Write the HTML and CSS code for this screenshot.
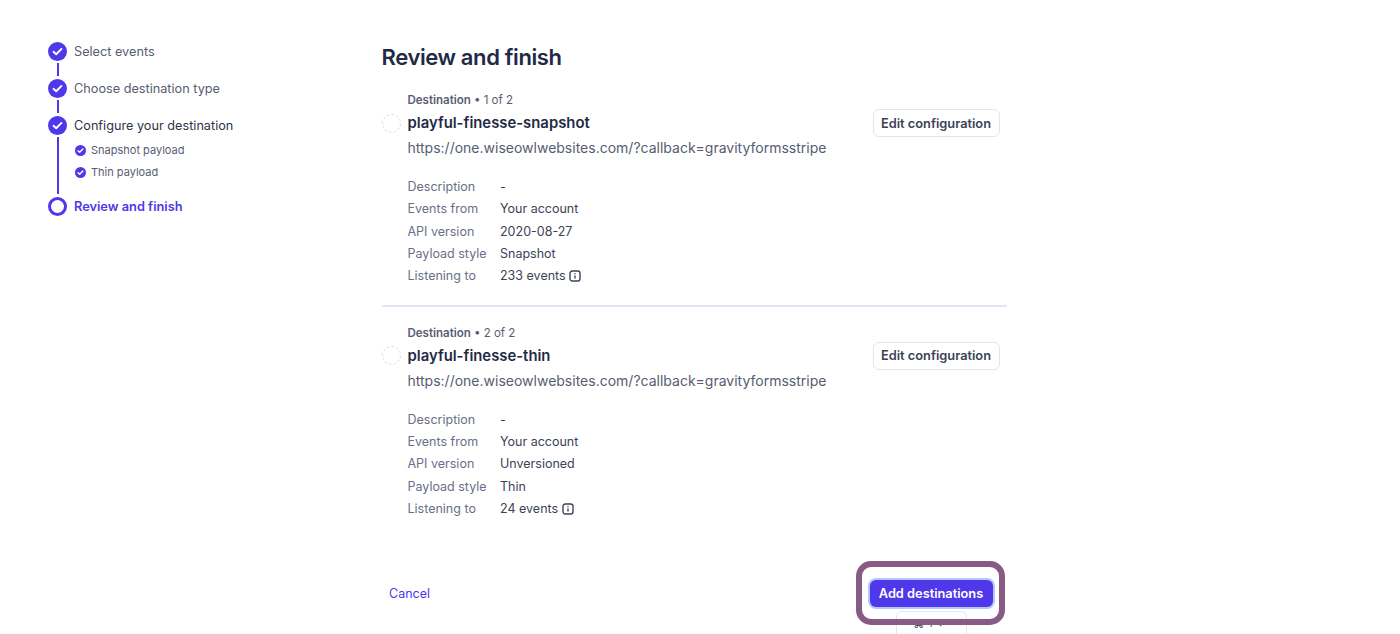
FILE: index.html
```html
<!DOCTYPE html>
<html lang="en">
<head>
  <meta charset="UTF-8" />
  <title>Review and finish</title>
  <link rel="stylesheet" href="styles.css">
</head>
<body>
  <div class="page">
    <nav class="steps">
      <div class="step">
        <span class="dot"><svg viewBox="0 0 20 20" width="19" height="19"><path d="M5.8 10.3l2.8 2.6 5.6-5.6" fill="none" stroke="#fff" stroke-width="2" stroke-linecap="round" stroke-linejoin="round"/></svg></span>
        <span class="step-label">Select events</span>
      </div>
      <div class="link"></div>
      <div class="step">
        <span class="dot"><svg viewBox="0 0 20 20" width="19" height="19"><path d="M5.8 10.3l2.8 2.6 5.6-5.6" fill="none" stroke="#fff" stroke-width="2" stroke-linecap="round" stroke-linejoin="round"/></svg></span>
        <span class="step-label">Choose destination type</span>
      </div>
      <div class="link"></div>
      <div class="step">
        <span class="dot"><svg viewBox="0 0 20 20" width="19" height="19"><path d="M5.8 10.3l2.8 2.6 5.6-5.6" fill="none" stroke="#fff" stroke-width="2" stroke-linecap="round" stroke-linejoin="round"/></svg></span>
        <span class="step-label dark">Configure your destination</span>
      </div>
      <div class="sub-block">
        <div class="link long"></div>
        <div class="subs">
          <div class="sub">
            <span class="sub-dot"><svg viewBox="0 0 12 12" width="11" height="11"><path d="M3.3 6.2l1.8 1.7 3.5-3.6" fill="none" stroke="#fff" stroke-width="1.5" stroke-linecap="round" stroke-linejoin="round"/></svg></span>
            Snapshot payload
          </div>
          <div class="sub">
            <span class="sub-dot"><svg viewBox="0 0 12 12" width="11" height="11"><path d="M3.3 6.2l1.8 1.7 3.5-3.6" fill="none" stroke="#fff" stroke-width="1.5" stroke-linecap="round" stroke-linejoin="round"/></svg></span>
            Thin payload
          </div>
        </div>
      </div>
      <div class="step">
        <span class="dot open"></span>
        <span class="step-label current">Review and finish</span>
      </div>
    </nav>

    <main class="main">
      <h1>Review and finish</h1>

      <section class="dest">
        <div class="eyebrow"><strong>Destination</strong> • 1 of 2</div>
        <div class="dest-head">
          <span class="spinner"></span>
          <div class="dest-name">playful-finesse-snapshot</div>
          <button class="edit">Edit configuration</button>
        </div>
        <div class="url">https://one.wiseowlwebsites.com/?callback=gravityformsstripe</div>
        <dl class="info">
          <dt>Description</dt><dd>-</dd>
          <dt>Events from</dt><dd>Your account</dd>
          <dt>API version</dt><dd>2020-08-27</dd>
          <dt>Payload style</dt><dd>Snapshot</dd>
          <dt>Listening to</dt>
          <dd>233 events <svg class="info-icon" viewBox="0 0 12 12" width="12" height="12"><rect x="1" y="1" width="10" height="10" rx="2.2" fill="none" stroke="#3c4257" stroke-width="1.4"/><path d="M6 5.4v3M6 3.3v.9" stroke="#3c4257" stroke-width="1.4"/></svg></dd>
        </dl>
      </section>

      <section class="dest second">
        <div class="eyebrow"><strong>Destination</strong> • 2 of 2</div>
        <div class="dest-head">
          <span class="spinner"></span>
          <div class="dest-name">playful-finesse-thin</div>
          <button class="edit">Edit configuration</button>
        </div>
        <div class="url">https://one.wiseowlwebsites.com/?callback=gravityformsstripe</div>
        <dl class="info">
          <dt>Description</dt><dd>-</dd>
          <dt>Events from</dt><dd>Your account</dd>
          <dt>API version</dt><dd>Unversioned</dd>
          <dt>Payload style</dt><dd>Thin</dd>
          <dt>Listening to</dt>
          <dd>24 events <svg class="info-icon" viewBox="0 0 12 12" width="12" height="12"><rect x="1" y="1" width="10" height="10" rx="2.2" fill="none" stroke="#3c4257" stroke-width="1.4"/><path d="M6 5.4v3M6 3.3v.9" stroke="#3c4257" stroke-width="1.4"/></svg></dd>
        </dl>
      </section>

      <footer class="actions">
        <a class="cancel">Cancel</a>
        <div class="add-wrap">
          <button class="add">Add destinations</button>
          <span class="highlight"></span>
          <span class="shortcut">⌘ + ↵</span>
        </div>
      </footer>
    </main>
  </div>
</body>
</html>
```

FILE: styles.css
```css
html, body {
  margin: 0;
  padding: 0;
  height: 100%;
  background: white;
  font-family: Inter, "Liberation Sans", sans-serif;
  color: #3c4257;
  overflow: hidden;
}
.page {
  display: flex;
  align-items: flex-start;
  padding: 0 0 0 48px;
}

/* Left step list */
.steps {
  width: 333.5px;
  flex: none;
  padding-top: 41px;
}
.step {
  display: flex;
  align-items: center;
  gap: 7px;
  height: 20px;
}
.dot {
  width: 19px;
  height: 19px;
  flex: none;
  border-radius: 50%;
  background: #4f37ea;
  display: block;
}
.dot svg {
  display: block;
}
.dot.open {
  box-sizing: border-box;
  background: white;
  border: 3px solid #4f37ea;
}
.step-label {
  font-size: 12.7px;
  color: #565d72;
}
.step-label.dark {
  color: #2e3548;
}
.step-label.current {
  font-size: 12.8px;
  color: #4f37ea;
  font-weight: 600;
}
.link {
  width: 2px;
  height: 13px;
  margin: 2px 0 2px 8.5px;
  background: #4f37ea;
}
.sub-block {
  display: flex;
  height: 59px;
  margin-top: 2px;
}
.link.long {
  height: 57px;
  margin: 0 0 0 8.5px;
  flex: none;
}
.subs {
  margin-left: 16px;
  padding-top: 2px;
}
.sub {
  display: flex;
  align-items: center;
  gap: 5.5px;
  height: 22px;
  font-size: 11px;
  color: #565d72;
}
.sub-dot {
  width: 11px;
  height: 11px;
  border-radius: 50%;
  background: #4f37ea;
}
.sub-dot svg {
  display: block;
}

/* Main column */
.main {
  width: 625px;
  flex: none;
}
h1 {
  margin: 44px 0 21px;
  font-size: 22px;
  line-height: 27px;
  font-weight: 600;
  letter-spacing: -0.38px;
  color: #1f2a44;
}
.dest {
  padding-bottom: 18px;
  border-bottom: 2px solid #e3e4f4;
}
.dest.second {
  border-bottom: none;
  padding-top: 18px;
  padding-bottom: 0;
}
.eyebrow {
  margin-left: 26px;
  font-size: 11.5px;
  line-height: 16px;
  color: #565d72;
}
.eyebrow strong {
  font-weight: 600;
}
.dest-head {
  display: flex;
  align-items: center;
  height: 30px;
  padding-right: 7px;
}
.spinner {
  box-sizing: border-box;
  width: 19px;
  height: 19px;
  flex: none;
  margin-right: 7px;
  border: 1.5px dashed #dcdde2;
  border-radius: 50%;
}
.dest-name {
  flex: 1;
  font-size: 14.85px;
  font-weight: 600;
  color: #1f2a44;
}
.edit {
  box-sizing: border-box;
  height: 28px;
  width: 127px;
  padding: 0;
  background: white;
  border: 1px solid #e3e5ea;
  border-radius: 6px;
  font: 600 12.8px Inter, "Liberation Sans", sans-serif;
  color: #3c4257;
}
.url {
  margin: 0 0 0 26px;
  font-size: 14px;
  line-height: 20px;
  color: #565d72;
}
.info {
  display: grid;
  grid-template-columns: 92.5px 1fr;
  grid-auto-rows: 22.25px;
  align-items: center;
  margin: 17.5px 0 0 26px;
  font-size: 12.5px;
}
.info dt {
  color: #697086;
}
.info dd {
  margin: 0;
  color: #3c4257;
}
.info-icon {
  vertical-align: -2px;
}

/* Footer */
.actions {
  display: flex;
  justify-content: space-between;
  align-items: center;
  margin-top: 60px;
  padding: 0 14px 0 7.5px;
}
.cancel {
  font-size: 12.5px;
  color: #4f37ea;
}
.add-wrap {
  position: relative;
}
.add {
  display: block;
  box-sizing: border-box;
  width: 123px;
  height: 27px;
  padding: 0;
  background: #4f37ea;
  border: none;
  border-radius: 6px;
  box-shadow: 0 0 0 2px #b4c7fa;
  font: 600 12.8px Inter, "Liberation Sans", sans-serif;
  color: white;
  position: relative;
  z-index: 2;
}
.highlight {
  position: absolute;
  left: -14px;
  top: -19px;
  width: 149px;
  height: 64px;
  box-sizing: border-box;
  border: 6px solid #875b85;
  border-radius: 15px;
  z-index: 3;
}
.shortcut {
  position: absolute;
  left: 26px;
  top: 31px;
  box-sizing: border-box;
  width: 71px;
  height: 40px;
  padding-top: 5px;
  background: white;
  border: 1px solid #e3e5ea;
  border-radius: 6px;
  font-size: 11px;
  text-align: center;
  color: #3c4257;
  z-index: 1;
}
```
